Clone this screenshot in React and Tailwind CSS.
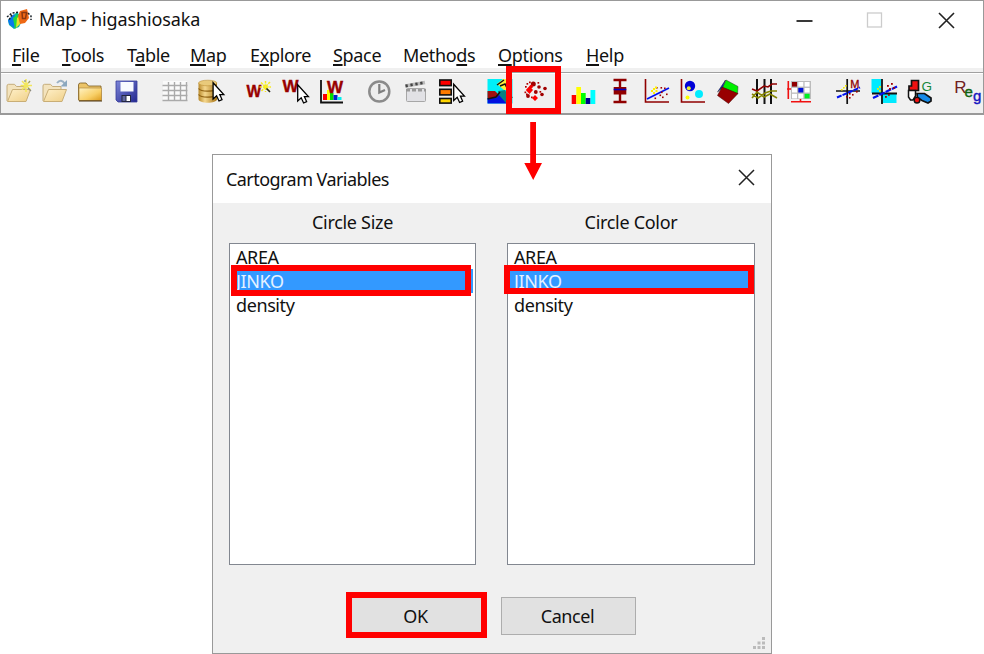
import React from "react";

// A toolbar button; its drawing uses the strip's own coordinates.
function Tool({ x, w, label, children }) {
  return (
    <button type="button" aria-label={label} className="block shrink-0">
      <svg width={w} height="38" viewBox={`${x} 74 ${w} 38`} className="block">
        {children}
      </svg>
    </button>
  );
}

function Cursor({ x, y }) {
  return (
    <path
      transform={`translate(${x} ${y})`}
      d="M0.7 0.8V17L4.2 13.8L6.6 19L9.6 17.6L7.4 12.6H11.4Z"
      fill="#fff"
      stroke="#000"
      strokeWidth="1.3"
    />
  );
}

function Dots({ points, color, s = 2 }) {
  return points.map(([x, y], i) => (
    <rect key={i} x={x} y={y} width={s} height={s} fill={color} />
  ));
}

function FolderOpen({ x }) {
  return (
    <g transform={`translate(${x} 0)`} strokeLinejoin="round">
      <path d="M0.5 101V86Q0.5 84.3 2 84.3H8L10 86.5H18.5V90" fill="#f3e3bd" stroke="#c5ad7b" />
      <path d="M1 101.5L6 89.5H24L19.5 101.5Z" fill="url(#paleFolder)" stroke="#c9ae76" />
    </g>
  );
}

const menus = [
  ["", "F", "ile", "w-[50px]"],
  ["", "T", "ools", "w-[65px]"],
  ["T", "a", "ble", "w-[63px]"],
  ["", "M", "ap", "w-[60px]"],
  ["E", "x", "plore", "w-[83px]"],
  ["", "S", "pace", "w-[70px]"],
  ["Metho", "d", "s", "w-[95px]"],
  ["", "O", "ptions", "w-[88px]"],
  ["", "H", "elp", "w-[50px]"],
];

function Toolbar() {
  return (
    <div className="flex h-[38px] pl-[4px]">
      <Tool x={5} w={33} label="New">
        <defs>
          <linearGradient id="paleFolder" x1="0" y1="0" x2="1" y2="1">
            <stop offset="0" stopColor="#fff0c9" />
            <stop offset="1" stopColor="#efcf87" />
          </linearGradient>
          <linearGradient id="goldFolder" x1="0" y1="0" x2="1" y2="1">
            <stop offset="0" stopColor="#fff3c4" />
            <stop offset="0.6" stopColor="#f8cf66" />
            <stop offset="1" stopColor="#dc9a1c" />
          </linearGradient>
          <linearGradient id="drum" x1="0" x2="1">
            <stop offset="0" stopColor="#b98a2c" />
            <stop offset="0.35" stopColor="#f5d78d" />
            <stop offset="1" stopColor="#a87414" />
          </linearGradient>
          <linearGradient id="disk" x1="0" y1="0" x2="1" y2="1">
            <stop offset="0" stopColor="#7d86d8" />
            <stop offset="1" stopColor="#23278f" />
          </linearGradient>
        </defs>
        <FolderOpen x={6.5} />
        <path d="M26 79V92M20.5 85.5H32M22 81L30.5 90M30 81L22 89.5" stroke="#f2e65a" strokeWidth="1.5" />
        <path d="M25 80V82M30 81L28.5 83M28 88L31 91" stroke="#8b8b80" strokeWidth="1.2" />
      </Tool>
      <Tool x={38} w={34} label="Open">
        <FolderOpen x={42.5} />
        <path d="M57 83Q61 78 65 84" stroke="#9bb1c4" strokeWidth="2" fill="none" />
        <path d="M67 80V86.5H60.5Z" fill="#8ca8bf" />
      </Tool>
      <Tool x={72} w={36} label="Close">
        <path d="M78.5 100V85Q78.5 83 80.5 83H86L88.5 86H101V100.5H79Z" fill="#ecc468" stroke="#7a5a1e" strokeWidth="0.8" />
        <path d="M79 88H101.5V100.5H79Z" fill="url(#goldFolder)" stroke="#a88038" strokeWidth="0.6" />
        <path d="M79 101H102" stroke="#4c3510" />
      </Tool>
      <Tool x={108} w={48} label="Save">
        <path d="M116 81H137V102H118L116 100Z" fill="url(#disk)" stroke="#353b99" strokeWidth="0.8" />
        <rect x="120.5" y="82" width="13" height="9.5" fill="#f8faff" />
        <rect x="121.5" y="95" width="9.5" height="7" fill="#22263f" />
        <rect x="122.5" y="96" width="3" height="5" fill="#6268a0" />
        <rect x="126.5" y="96" width="3.5" height="5" fill="#fff" />
      </Tool>
      <Tool x={156} w={37} label="Table">
        <rect x="163" y="81" width="24" height="20" fill="#fafafa" />
        <path d="M162.5 85.5H187.5M162.5 90.5H187.5M162.5 95.5H187.5M162.5 100.5H187.5M168.5 82V101M174.5 82V101M180.5 82V101M186.5 82V101" stroke="#aaa" strokeWidth="1.4" />
      </Tool>
      <Tool x={193} w={44} label="Select">
        <path d="M198.5 83V99C198.5 104 217 104 217 99V83Z" fill="url(#drum)" />
        <ellipse cx="207.7" cy="83" rx="9.2" ry="2.8" fill="#e9ca7b" stroke="#bd9138" strokeWidth="0.6" />
        <path d="M198.5 88.5C201 92 214 92 217 88.5M198.5 94.5C201 98 214 98 217 94.5" fill="none" stroke="#916314" strokeWidth="1.2" />
        <Cursor x={212.4} y={82} />
      </Tool>
      <Tool x={237} w={40} label="Create weights">
        <text x="246.5" y="97" fontSize="17" fontWeight="700" fill="#980000" textLength="14.5" lengthAdjust="spacingAndGlyphs" stroke="#980000" strokeWidth="0.4" fontFamily="Liberation Sans, sans-serif">W</text>
        <path d="M265.5 81V92M259.5 87H271M261 82.5L269.5 91M270 82L261 91.5" stroke="#f6ea20" strokeWidth="1.5" strokeDasharray="2.5 .8" />
        <path d="M266.5 88.5L270 92" stroke="#222" strokeWidth="1.6" />
      </Tool>
      <Tool x={277} w={36} label="Open weights">
        <text x="282.5" y="91.5" fontSize="17" fontWeight="700" fill="#980000" stroke="#980000" strokeWidth="0.4" fontFamily="Liberation Sans, sans-serif">W</text>
        <Cursor x={297} y={84} />
      </Tool>
      <Tool x={313} w={48} label="Weights histogram">
        <path d="M321 80V102.5H343" fill="none" stroke="#111" strokeWidth="1.8" />
        <path d="M323 94h4v6h-4z" fill="red" />
        <path d="M327 90h3v10h-3z" fill="#ff0" />
        <path d="M330 93h3.5v7h-3.5z" fill="#0d0" />
        <path d="M333.5 95h4v5h-4z" fill="#0020d0" />
        <path d="M337.5 97h4v3h-4z" fill="#0ee" />
        <text x="327" y="92.5" fontSize="17" fontWeight="700" fill="#980000" stroke="#980000" strokeWidth="0.4" fontFamily="Liberation Sans, sans-serif">W</text>
      </Tool>
      <Tool x={361} w={37} label="Time">
        <circle cx="379.3" cy="91.5" r="10" fill="#eee" stroke="#8b8b8b" strokeWidth="2.5" />
        <path d="M379.3 84V92.5L385 90" fill="none" stroke="#7f7f7f" strokeWidth="2.2" />
      </Tool>
      <Tool x={398} w={35} label="Movie">
        <rect x="406.5" y="88.5" width="19" height="13" rx="1" fill="#e1e1e5" stroke="#a7a7a7" />
        <path d="M405.5 86L425 82.5" stroke="#bbb" strokeWidth="3.6" />
        <path d="M405.5 86L425 82.5" stroke="#444" strokeWidth="2.8" strokeDasharray="2.3 2.7" />
        <path d="M406 90.2H426" stroke="#999" strokeWidth="2.6" strokeDasharray="4 2" />
      </Tool>
      <Tool x={433} w={48} label="Category">
        <g stroke="#111" strokeWidth="1.6">
          <rect x="439.8" y="80" width="11.4" height="5.6" fill="red" />
          <rect x="439.8" y="89.3" width="11.4" height="5.6" fill="#ff7b00" />
          <rect x="439.8" y="98.5" width="11.4" height="4.6" fill="#ffd500" />
        </g>
        <Cursor x={453} y={83.5} />
      </Tool>
      <Tool x={481} w={34} label="Choropleth map">
        <rect x="487.5" y="79" width="25" height="24.5" fill="#00f0f8" />
        <path d="M497 84L503 79H512V90H504Z" fill="#ffef38" />
        <path d="M487.5 91L495 91L500 96L496 98H487.5Z" fill="#a01010" />
        <path d="M487.5 98H496L500 94L512 103.5H487.5Z" fill="#0010e0" />
        <path d="M498 91L505 90L512 103H506L499 95Z" fill="#078080" />
        <path d="M497 85L504 80M500 86L505 84L512 98M487.5 99L496 97L500 92" fill="none" stroke="#111" strokeWidth="1.5" />
      </Tool>
      <Tool x={515} w={48} label="Cartogram">
        <g fill="#a00000">
          <circle cx="533.3" cy="84" r="2.5" /><circle cx="539" cy="87" r="1.8" />
          <circle cx="545" cy="88.5" r="1.8" /><circle cx="542" cy="94.5" r="1.8" />
          <circle cx="535.8" cy="92" r="1.9" /><circle cx="528" cy="96" r="1.9" />
        </g>
        <Dots color="#b00000" s={1.7} points={[[525, 86], [526.5, 83], [529, 81.5], [537.5, 82], [524.5, 91.5], [526, 93.5], [539.5, 91], [531, 96.5]]} />
        <path d="M529.5 86L533 90L529.5 94L525.8 90ZM535 95L538 98L535 101L532 98Z" fill="red" />
        <circle cx="531.2" cy="86.5" r="1.8" fill="#e00" />
      </Tool>
      <Tool x={563} w={41} label="Histogram">
        <path d="M571.7 95h4.6v9h-4.6z" fill="red" />
        <path d="M576.3 87h4.7v17h-4.7z" fill="#ff0" />
        <path d="M581 93h4.7v11h-4.7z" fill="#0f0" />
        <path d="M585.7 98h4.8v6h-4.8z" fill="#000090" />
        <path d="M590.5 90h4.8v14h-4.8z" fill="#0ff" />
      </Tool>
      <Tool x={604} w={35} label="Box plot">
        <path d="M613.5 80H626.5M613.5 102H626.5M620 80V102" stroke="#900000" strokeWidth="2.4" />
        <rect x="613.7" y="87" width="12.6" height="7.5" fill="#900000" />
        <path d="M613.7 89.5H626.3" stroke="#0000c0" strokeWidth="1.6" />
      </Tool>
      <Tool x={639} w={36} label="Scatter plot">
        <path d="M645.5 79V102H669" fill="none" stroke="#900000" strokeWidth="1.6" />
        <path d="M647 99L669 88" stroke="#0010f0" strokeWidth="1.8" />
        <Dots color="#a00000" s={1.6} points={[[656, 87], [660.5, 87], [664, 87.5], [661, 91.5], [666, 93.5], [659.5, 94.5], [662, 96.5], [654.5, 97.5]]} />
        <Dots color="#fff000" s={2} points={[[651, 90], [653, 88], [655, 86.5], [653, 92], [655.5, 90]]} />
      </Tool>
      <Tool x={675} w={36} label="Bubble chart">
        <path d="M681.5 79V102H705" fill="none" stroke="#900000" strokeWidth="1.6" />
        <circle cx="690" cy="86" r="5.2" fill="#0000d8" />
        <circle cx="688.8" cy="88.3" r="2" fill="#e8ef30" />
        <circle cx="699" cy="94" r="4" fill="#00ecff" />
        <circle cx="687.5" cy="97.5" r="2" fill="#ff0" />
      </Tool>
      <Tool x={711} w={34} label="3D plot">
        <path d="M726 80L738 86.5L737.5 94L722.5 87.5Z" fill="#00f000" stroke="#333" strokeWidth="0.5" />
        <path d="M725.5 80L717.5 92L722.5 87.5Z" fill="#0020d0" stroke="#222" strokeWidth="0.5" />
        <path d="M722 87L738 93.5L728.5 103.5L717.5 95.5Z" fill="#980000" stroke="#400000" strokeWidth="0.5" />
      </Tool>
      <Tool x={745} w={37} label="Parallel plot">
        <path d="M757 79V104M764.5 79V104M771 79V104" stroke="#111" strokeWidth="2" />
        <path d="M752 89L757 91L764 86L768 87L772 84H777" fill="none" stroke="#900000" strokeWidth="1.6" />
        <path d="M752 98L757 92L764 97L770 94L777 98M752 94L758 98L765 93L771 91L777 91" fill="none" stroke="#858500" strokeWidth="1.6" />
      </Tool>
      <Tool x={782} w={48} label="Conditional plot">
        <rect x="791" y="81" width="20" height="18" fill="#bcbcbc" />
        {[0, 1, 2].map((r) => [0, 1, 2].map((c) => (
          <rect key={`${r}-${c}`} x={792 + c * 6.3} y={82 + r * 5.9} width="5" height="4.6"
            fill={r === 0 && c === 0 ? "#900000" : r === 1 && c === 1 ? "#0010d8" : r === 2 && c === 2 ? "#00f020" : "#fff"} />
        )))}
        <path d="M788.3 81V99M787 89H791M791 101.8H811M800.5 99V102" stroke="#f01010" strokeWidth="1.6" />
      </Tool>
      <Tool x={830} w={36} label="Moran scatter plot">
        <path d="M836 91H860M847.2 79V104" stroke="#111" strokeWidth="1.7" />
        <path d="M837 97.5L860 87.5" stroke="#0010f0" strokeWidth="2" strokeDasharray="5 1" />
        <text x="850.3" y="87.5" fontSize="11" fill="#900000" stroke="#900000" strokeWidth=".3" fontFamily="Liberation Sans, sans-serif">M</text>
        <Dots color="#a00000" s={1.6} points={[[849, 93], [852, 94], [849, 97], [846, 96], [856, 91]]} />
        <Dots color="#f3ea00" s={1.6} points={[[841, 89], [843, 87], [845, 85]]} />
      </Tool>
      <Tool x={866} w={36} label="Bivariate plot">
        <path d="M871.5 79H881V93H871.5ZM881 93H896.5V103H881Z" fill="#00eaff" />
        <path d="M872 93.5H897M882 79V104" stroke="#111" strokeWidth="1.8" />
        <path d="M873 98L897 86.5" stroke="#0010f0" strokeWidth="2.2" strokeDasharray="6 1" />
        <Dots color="#a00000" s={1.8} points={[[887, 85], [891, 83], [893, 87], [889, 88], [888, 94], [885, 96]]} />
        <Dots color="#f3ea00" s={1.8} points={[[877, 88], [879, 86], [879, 90]]} />
      </Tool>
      <Tool x={902} w={44} label="LISA map">
        <path d="M911.5 80.5H918.5V90.5H909V86H911.5Z" fill="#f01010" stroke="#111" strokeWidth="1.7" />
        <path d="M908.5 90.5H915.5V96L913 100H910.5L908.5 97Z" fill="#fff" stroke="#111" strokeWidth="1.5" />
        <path d="M917 93.5H924.5L931 98V101L928 103L922 100.5L917.5 97.5Z" fill="#168be8" stroke="#111" strokeWidth="1.7" />
        <circle cx="917" cy="100.2" r="2.8" fill="#f01010" stroke="#111" strokeWidth="1.4" />
        <text x="921.5" y="91" fontSize="13.5" fill="#15883c" fontFamily="Liberation Sans, sans-serif">G</text>
      </Tool>
      <Tool x={946} w={37} label="Regression">
        <text x="954.3" y="92.5" fontSize="17" fontFamily="Liberation Sans, sans-serif" strokeWidth="0.4" fill="#702020">
          R
          <tspan x="964.5" dy="4.5" fontSize="15" fill="#106410" stroke="#106410">e</tspan>
          <tspan x="973" dy="3.5" fontSize="15" fill="#1515c0" stroke="#1515c0">g</tspan>
        </text>
      </Tool>
    </div>
  );
}

function VariableList({ title, width, marker }) {
  return (
    <section className={width}>
      <h2 className="h-[40px] pt-[6px] text-center leading-[26px] tracking-[-0.3px]">{title}</h2>
      <ul className="relative h-[322px] border-[1.5px] border-[#828790] bg-white pt-[1px]">
        <li className="h-[24px] pl-[6px] leading-[25px]">AREA</li>
        <li className="mr-[2px] ml-px h-[24px] bg-[#3399ff] pl-[5px] leading-[25px] text-[#e4f1ff]">JINKO</li>
        <li className="h-[24px] pl-[6px] leading-[25px]">density</li>
        <div className={marker} />
      </ul>
    </section>
  );
}

export default function App() {
  return (
    <div className="relative flex h-[654px] w-[984px] flex-col overflow-hidden bg-white font-['Noto_Sans',sans-serif] text-[18px] tracking-[-0.4px] text-[#111]">
      <header className="h-[115px] border border-b-2 border-[#999] bg-white">
        <div className="flex h-[37px] items-center">
          <svg width="28" height="24" viewBox="5 8 28 24" className="ml-[4px] shrink-0">
            <path d="M8 20L17 12L23 19L19 27L14 29L9 25Z" fill="#08b6a0" />
            <path d="M8 20L14 14L17 21L14 28L9 24Z" fill="#0878ee" />
            <path d="M13 18L18 14L20 21L15 29Z" fill="#22d840" />
            <path d="M17 18L21 15V23L16 28Z" fill="#e6e229" />
            <path d="M20 11L27 9L29 18L25 23L20 24L18 16Z" fill="#ee6815" />
            <path d="M22 12.5H26.5L25.5 18.5H22.5Z" fill="none" stroke="#8b3710" strokeWidth="1.5" />
            <path d="M7 17L12 13L19 12M28 13L31 16V20M12 15L9 20" fill="none" stroke="#172127" strokeWidth="1.5" strokeDasharray="2 1.5" />
          </svg>
          <h1 className="ml-[6px] grow tracking-[-0.12px]">Map - higashiosaka</h1>
          <svg width="165" height="24" viewBox="795 8 165 24" className="mr-[23px] shrink-0" fill="none">
            <path d="M796.5 21H812.5" stroke="#222" strokeWidth="1.8" />
            <rect x="867.5" y="13" width="14" height="14" stroke="#ccc" strokeWidth="1.3" />
            <path d="M939 13L954 28M954 13L939 28" stroke="#222" strokeWidth="1.6" />
          </svg>
        </div>
        <nav className="flex h-[30px] pl-[11px] leading-[35px] tracking-[-0.33px]">
          {menus.map(([before, key, after, width]) => (
            <span key={before + key + after} className={`${width} shrink-0 whitespace-nowrap`}>
              {before}<span className="underline decoration-[1.5px] underline-offset-[2px]">{key}</span>{after}
            </span>
          ))}
        </nav>
        <div className="h-[45px] bg-[#f0f0f0] pt-[4px]">
          <div className="border-t-[1.5px] border-[#a0a0a0]">
            <div className="border-t border-white"><Toolbar /></div>
          </div>
        </div>
      </header>

      <main className="mt-[39px] ml-[212px] h-[500px] w-[560px] border-[1.5px] border-[#999] bg-[#f0f0f0]">
        <div className="flex h-[48px] items-center justify-between bg-white pr-[16px] pl-[13px]">
          <h1 className="tracking-[-0.55px]">Cartogram Variables</h1>
          <svg width="17" height="17" viewBox="0 0 17 17" className="-mt-[3px]">
            <path d="M1 1L16 16M16 1L1 16" stroke="#222" strokeWidth="1.5" />
          </svg>
        </div>
        <div className="flex justify-between pr-[16px] pl-[16px]">
          <VariableList title="Circle Size" width="w-[247px]" marker="absolute top-[21px] left-[1px] h-[31px] w-[240px] border-[6px] border-[#ff0000]" />
          <VariableList title="Circle Color" width="w-[248px]" marker="absolute top-[21px] left-[-4px] h-[29px] w-[250px] border-[6px] border-[#ff0000]" />
        </div>
        <div className="mt-[27px] flex pl-[133px]">
          <button type="button" className="h-[46px] w-[141px] border-[6px] border-[#ff0000] bg-[#e1e1e1] pt-[2px] pr-[2px]">OK</button>
          <button type="button" className="mt-[5px] ml-[14px] h-[38px] w-[135px] border-[1.5px] border-[#adadad] bg-[#e1e1e1] pr-[2px]">Cancel</button>
          <svg width="14" height="14" viewBox="0 0 14 14" className="mt-[44px] ml-[116px] shrink-0" fill="#bbb">
            <path d="M10 1h3v3h-3zM5.5 5.5h3v3h-3zM10 5.5h3v3h-3zM1 10h3v3H1zM5.5 10h3v3h-3zM10 10h3v3h-3z" />
          </svg>
        </div>
      </main>

      <div className="absolute top-[66px] left-[506px] h-[48px] w-[55px] border-[6px] border-[#ff0000]" />
      <svg width="18" height="58" viewBox="0 0 18 58" className="absolute top-[122px] left-[524px]">
        <path d="M6.2 0H12V41H18L9.2 58L.3 41H6.2Z" fill="red" />
      </svg>
    </div>
  );
}
